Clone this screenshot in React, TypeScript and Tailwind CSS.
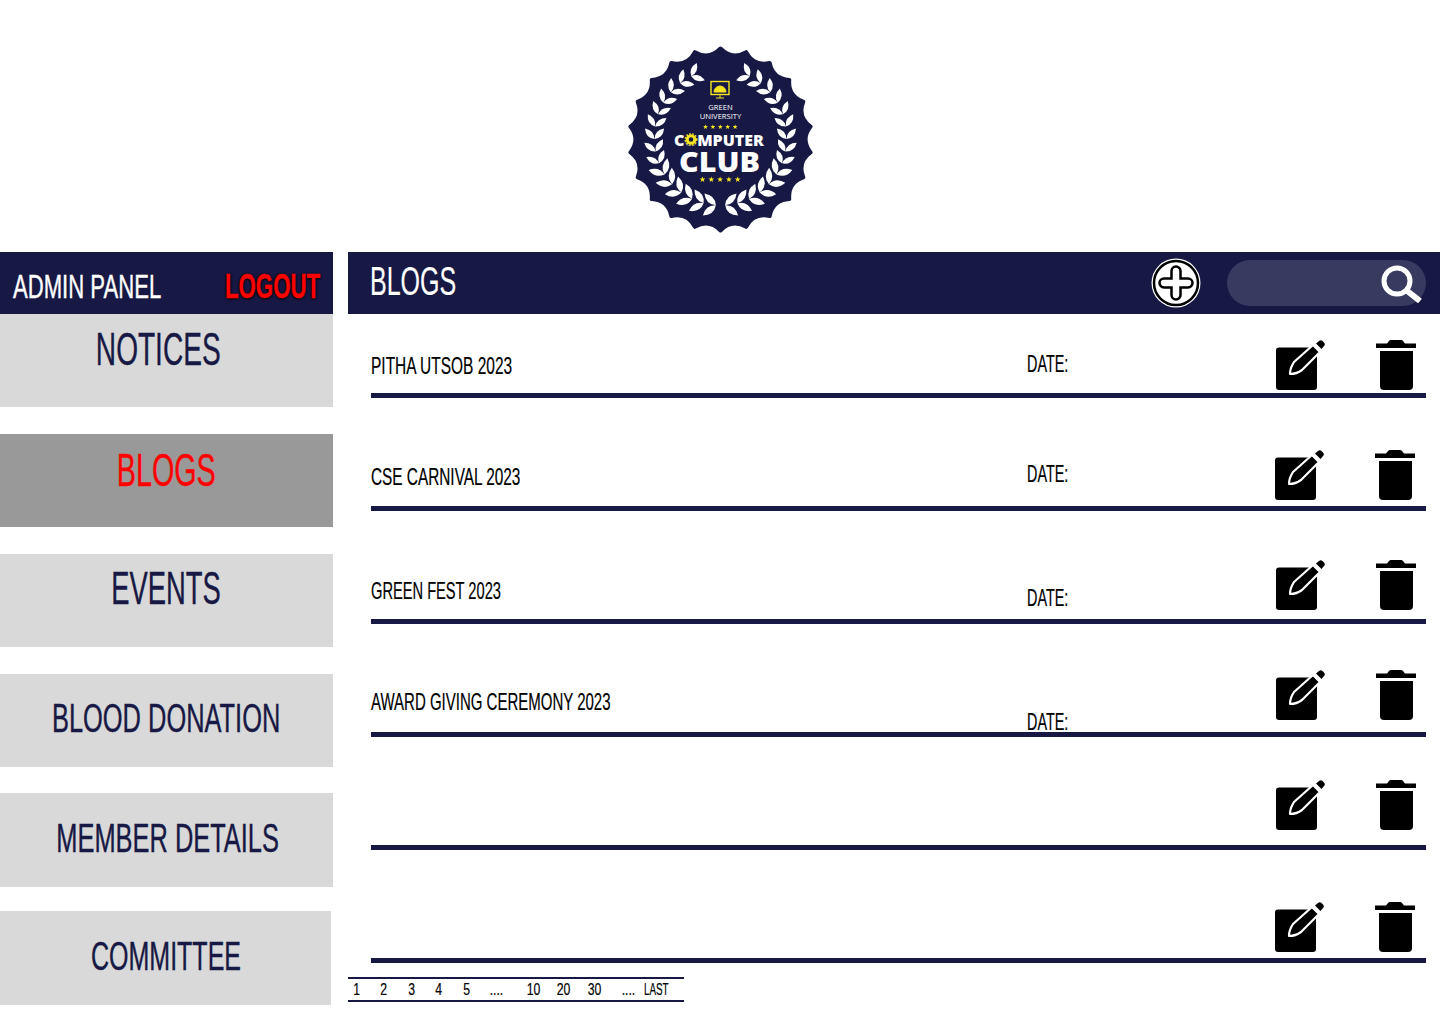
const sideItems = [
  { label: "NOTICES", box: "mt-0 h-[93px] w-[333px] bg-[#d9d9d9] pb-[23px] pr-[16px]", text: "scale-x-[.61] text-[46px] text-[#171844]" },
  { label: "BLOGS", box: "mt-[27px] h-[93px] w-[333px] bg-[#999999] pb-[21px]", text: "scale-x-[.625] text-[46px] text-[#ff0000]" },
  { label: "EVENTS", box: "mt-[27px] h-[93px] w-[333px] bg-[#d9d9d9] pb-[25px]", text: "scale-x-[.595] text-[46px] text-[#171844]" },
  { label: "BLOOD DONATION", box: "mt-[27px] h-[93px] w-[333px] bg-[#d9d9d9] pb-[5px]", text: "scale-x-[.62] text-[41px] text-[#171844]" },
  { label: "MEMBER DETAILS", box: "mt-[26px] h-[94px] w-[333px] bg-[#d9d9d9] pb-[4px] pl-[3px]", text: "scale-x-[.62] text-[41px] text-[#171844]" },
  { label: "COMMITTEE", box: "mt-[24px] h-[94px] w-[331px] bg-[#d9d9d9] pb-[4px]", text: "scale-x-[.61] text-[41px] text-[#171844]" },
];

const rows = [
  { title: "PITHA UTSOB 2023", sx: "scale-x-[.645]", h: "h-[84px]", tm: "mt-[40px]", dm: "mt-[38px]", im: "mt-[26px]", dw: "w-[249px]" },
  { title: "CSE CARNIVAL 2023", sx: "scale-x-[.64]", h: "h-[113px]", tm: "mt-[67px]", dm: "mt-[64px]", im: "mt-[52px]", dw: "w-[248px]" },
  { title: "GREEN FEST 2023", sx: "scale-x-[.61]", h: "h-[113px]", tm: "mt-[68px]", dm: "mt-[75px]", im: "mt-[49px]", dw: "w-[249px]" },
  { title: "AWARD GIVING CEREMONY 2023", sx: "scale-x-[.625]", h: "h-[113px]", tm: "mt-[66px]", dm: "mt-[86px]", im: "mt-[46px]", dw: "w-[249px]" },
  { title: "", sx: "", h: "h-[113px]", tm: "", dm: "", im: "mt-[43px]", dw: "w-[249px]" },
  { title: "", sx: "", h: "h-[113px]", tm: "", dm: "", im: "mt-[52px]", dw: "w-[248px]" },
];

const pages = [
  { t: "1", m: "ml-0", sx: "scale-x-[.72]" },
  { t: "2", m: "ml-[9px]", sx: "scale-x-[.72]" },
  { t: "3", m: "ml-[10px]", sx: "scale-x-[.72]" },
  { t: "4", m: "ml-[9px]", sx: "scale-x-[.72]" },
  { t: "5", m: "ml-[10px]", sx: "scale-x-[.72]" },
  { t: "....", m: "ml-[11px]", sx: "scale-x-[.72]" },
  { t: "10", m: "ml-[19px]", sx: "scale-x-[.72]" },
  { t: "20", m: "ml-[12px]", sx: "scale-x-[.72]" },
  { t: "30", m: "ml-[13px]", sx: "scale-x-[.72]" },
  { t: "....", m: "ml-[16px]", sx: "scale-x-[.72]" },
  { t: "LAST", m: "ml-[10px]", sx: "scale-x-[.58]" },
];

const Star = ({ x, y, r }: { x: number; y: number; r: number }) => {
  const pts = [];
  for (let i = 0; i < 10; i++) {
    const rad = i % 2 ? r * 0.42 : r;
    const a = (i * 36 - 90) * (Math.PI / 180);
    pts.push(`${(x + rad * Math.cos(a)).toFixed(2)},${(y + rad * Math.sin(a)).toFixed(2)}`);
  }
  return <polygon points={pts.join(" ")} fill="#f4e422" />;
};

const Logo = () => {
  const cx = 94.5;
  const cy = 93.5;

  // scalloped edge
  let edge = "";
  const n = 22;
  for (let i = 0; i < n; i++) {
    const a = (i / n) * Math.PI * 2 - Math.PI / 2;
    const b = ((i + 0.5) / n) * Math.PI * 2 - Math.PI / 2;
    const c = ((i + 1) / n) * Math.PI * 2 - Math.PI / 2;
    if (i === 0) edge += `M${cx + 91 * Math.cos(a)} ${cy + 91 * Math.sin(a)}`;
    edge += `Q${cx + 80 * Math.cos(b)} ${cy + 80 * Math.sin(b)} ${cx + 91 * Math.cos(c)} ${cy + 91 * Math.sin(c)}`;
  }
  edge += "Z";

  // one side of the wreath, mirrored for the other
  const leaves = [];
  for (let i = 0; i < 15; i++) {
    const deg = 4 + i * 10.8;
    const th = (deg * Math.PI) / 180;
    const r = 66 + (deg > 90 ? (deg - 90) * 0.06 : 0);
    const x = cx - r * Math.sin(th);
    const y = cy + r * Math.cos(th);
    const rot = (Math.atan2(-Math.sin(th), -Math.cos(th)) * 180) / Math.PI;
    const size = i < 6 ? 1.1 : 0.95;
    leaves.push(
      <g key={i} transform={`translate(${x} ${y})`}>
        <path d="M0 0Q7 -6 15 0Q7 6 0 0Z" transform={`rotate(${rot - 42}) scale(${size})`} />
        <path d="M0 0Q7 -6 15 0Q7 6 0 0Z" transform={`rotate(${rot + 42}) scale(${size})`} />
      </g>
    );
  }

  return (
    <svg width="189" height="187" viewBox="0 0 189 187">
      <path d={edge} fill="#171844" stroke="#171844" strokeWidth="4" strokeLinejoin="round" />
      <g fill="#ffffff">{leaves}</g>
      <g fill="#ffffff" transform={`translate(${cx * 2} 0) scale(-1 1)`}>{leaves}</g>
      {/* monitor */}
      <rect x="85" y="35.500" width="18" height="13" fill="none" stroke="#f4e422" strokeWidth="1.400" />
      <path d="M88 46a6 6 0 0 1 12 0zM90 52h8M94 48v4" fill="#f4e422" stroke="#f4e422" strokeWidth="1" />
      <text x={cx} y="64" textAnchor="middle" fill="#ffffff" fontSize="7.600" fontFamily="'Open Sans', sans-serif">GREEN</text>
      <text x={cx} y="72.500" textAnchor="middle" fill="#ffffff" fontSize="7.600" fontFamily="'Open Sans', sans-serif">UNIVERSITY</text>
      {[0, 1, 2, 3, 4].map((i) => <Star key={i} x={79.5 + i * 7.4} y={81} r={2.6} />)}
      <text x="48" y="99.700" fill="#ffffff" fontSize="16" fontWeight="800" fontFamily="'Open Sans', sans-serif">COMPUTER</text>
      {/* gear sits on top of the O */}
      <circle cx="65" cy="93.500" r="6.500" fill="#171844" />
      <circle cx="65" cy="93.500" r="3.800" fill="none" stroke="#f4e422" strokeWidth="3" />
      <circle cx="65" cy="93.500" r="5.800" fill="none" stroke="#f4e422" strokeWidth="1.400" strokeDasharray="1.600 1.500" />
      <text x="53" y="125.700" fill="#ffffff" fontSize="29" fontWeight="800" fontFamily="'Open Sans', sans-serif" textLength="81" lengthAdjust="spacingAndGlyphs">CLUB</text>
      {[0, 1, 2, 3, 4].map((i) => <Star key={i} x={76.5 + i * 8.8} y={133.5} r={3} />)}
    </svg>
  );
};

const EditIcon = () => (
  <svg width="50" height="52" viewBox="0 0 50 52" className="shrink-0">
    <rect x="0" y="7.500" width="41" height="42.500" rx="3" fill="#000000" />
    <path d="M14 34C14 29 16 25 18 22L37 5L44 12L26 30C22 33 18 34 14 34Z" fill="#000000" stroke="#ffffff" strokeWidth="2.200" strokeLinejoin="round" />
    <path d="M40 3.500L43 1a2.500 2.500 0 0 1 3.500 0L48 2.500a2.500 2.500 0 0 1 0 3.500L45.500 9Z" fill="#000000" />
  </svg>
);

const TrashIcon = () => (
  <svg width="40" height="50" viewBox="0 0 40 50" className="ml-[50px] shrink-0">
    <path d="M0 3.500h11L13 1c.5-.7 1.200-1 2-1h10c.8 0 1.500.3 2 1l2 2.500h11v4.500H0z" fill="#000000" />
    <path d="M4 11h33v35a4 4 0 0 1-4 4H8a4 4 0 0 1-4-4z" fill="#000000" />
  </svg>
);

export default function App() {
  return (
    <div className="h-[1024px] w-[1440px] overflow-hidden bg-white font-['Liberation_Sans_Narrow','Liberation_Sans',sans-serif]">
      <div className="flex h-[252px] justify-center pl-px pt-[46px]">
        <Logo />
      </div>
      <div className="flex">
        <aside className="w-[333px] shrink-0 [-webkit-text-stroke:0.4px]">
          <div className="flex h-[62px] items-end bg-[#171844] pb-[9px] pl-[13px]">
            <div className="w-[212px] shrink-0">
              <span className="inline-block origin-left scale-x-[.65] whitespace-nowrap text-[34px] leading-[38px] text-white">ADMIN PANEL</span>
            </div>
            <div className="w-[95px] shrink-0">
              <span className="inline-block origin-left scale-x-[.635] whitespace-nowrap text-[35px] font-bold leading-[38px] text-[#ff0000] [text-shadow:0_0_3px_#000,1px_1px_3px_#000]">LOGOUT</span>
            </div>
          </div>
          {sideItems.map((item) => (
            <div key={item.label} className={`flex items-center justify-center ${item.box}`}>
              <span className={`inline-block whitespace-nowrap leading-none ${item.text}`}>{item.label}</span>
            </div>
          ))}
        </aside>

        <main className="ml-[15px] w-[1092px] [-webkit-text-stroke:0.2px]">
          <div className="flex h-[62px] items-center bg-[#171844] pl-[22px] pr-[14px]">
            <span className="inline-block origin-left scale-x-[.61] pb-[4px] text-[41px] leading-none text-white">BLOGS</span>
            <svg width="50" height="50" viewBox="0 0 50 50" className="ml-auto shrink-0">
              <circle cx="25" cy="25" r="24.500" fill="#ffffff" />
              <circle cx="25" cy="25" r="22" fill="#ffffff" stroke="#000000" strokeWidth="2.500" />
              <path d="M20.500 13a4.500 4.500 0 0 1 9 0v7.500H37a4.500 4.500 0 0 1 0 9h-7.500V37a4.500 4.500 0 0 1-9 0v-7.500H13a4.500 4.500 0 0 1 0-9h7.500z" fill="#ffffff" stroke="#000000" strokeWidth="2.500" />
            </svg>
            <div className="ml-[26px] flex h-[46px] w-[199px] items-center justify-end rounded-full bg-[#383a5f] pr-[3px]">
              <svg width="44" height="40" viewBox="0 0 44 40" className="shrink-0">
                <circle cx="18" cy="18" r="13" fill="none" stroke="#ffffff" strokeWidth="5" />
                <path d="M27 27l14 11" stroke="#ffffff" strokeWidth="6" />
              </svg>
            </div>
          </div>

          <div className="ml-[23px] w-[1055px]">
            {rows.map((row, i) => (
              <div key={i} className={`flex border-b-[5px] border-[#171844] ${row.h}`}>
                <div className={`w-[656px] shrink-0 ${row.tm}`}>
                  {row.title && <span className={`inline-block origin-left whitespace-nowrap text-[24px] leading-[24px] text-black ${row.sx}`}>{row.title}</span>}
                </div>
                <div className={`shrink-0 ${row.dw} ${row.dm}`}>
                  {row.title && <span className="inline-block origin-left scale-x-[.6] text-[24px] leading-[24px] text-black">DATE:</span>}
                </div>
                <div className={`flex items-start ${row.im}`}>
                  <EditIcon />
                  <TrashIcon />
                </div>
              </div>
            ))}
          </div>

          <div className="mt-[14px] flex h-[25px] w-[336px] items-center border-y-2 border-[#171844] text-[17px] leading-none text-black">
            {pages.map((p, i) => (
              <span key={i} className={`flex w-[18px] shrink-0 justify-center whitespace-nowrap ${p.m}`}>
                <span className={`inline-block ${p.sx}`}>{p.t}</span>
              </span>
            ))}
          </div>
        </main>
      </div>
    </div>
  );
}
